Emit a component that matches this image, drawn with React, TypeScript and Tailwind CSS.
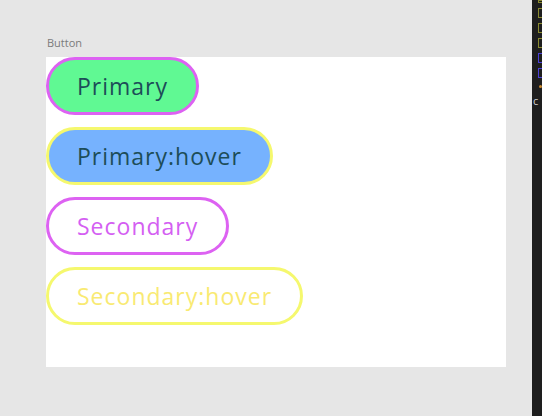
const buttons = [
  { label: 'Primary', cls: 'bg-[#60f993] border-[#dd62f2] text-[#1d4d58]' },
  { label: 'Primary:hover', cls: 'bg-[#76b2fe] border-[#f5f86e] text-[#1d4d58]' },
  { label: 'Secondary', cls: 'bg-white border-[#dd62f2] text-[#d45ff2]' },
  { label: 'Secondary:hover', cls: 'bg-white border-[#f5f86e] text-[#f9ea72]' },
];

const strip = [
  { top: 'h-[3px]', color: 'border-[#8a8a2e]' },
  { top: 'h-[10px]', color: 'border-[#8a8a2e]' },
  { top: 'h-[10px]', color: 'border-[#8a8a2e]' },
  { top: 'h-[10px]', color: 'border-[#8a8a2e]' },
  { top: 'h-[10px]', color: 'border-[#4b3fd6]' },
  { top: 'h-[10px]', color: 'border-[#4b3fd6]' },
];

export default function App() {
  return (
    <div className="flex h-[416px] w-[542px] bg-[#e6e6e6]" style={{ fontFamily: '"Open Sans", sans-serif' }}>
      <div className="flex flex-1 flex-col pl-[46px] pt-[36px]">
        <div className="pl-px text-[11px] leading-[14px] text-[#7b7b7b]">Button</div>
        <div className="mt-[7px] flex h-[310px] w-[460px] flex-col items-start gap-3 bg-white">
          {buttons.map((b) => (
            <button
              key={b.label}
              className={`h-[58px] rounded-full border-[3px] px-[28px] text-[23px] tracking-[1px] ${b.cls}`}
            >
              {b.label}
            </button>
          ))}
        </div>
      </div>
      {/* editor gutter peeking in on the right */}
      <div className="flex w-[10px] flex-col items-end gap-[5px] bg-[#1e1e1e]">
        {strip.map((s, i) => (
          <div key={i} className={`w-[4px] border border-r-0 ${s.top} ${s.color}`} />
        ))}
        <div className="mt-[2px] h-[3px] w-[3px] rounded-full bg-[#c9882c]" />
        <div className="mt-[2px] w-full pl-[1px] text-[11px] leading-[11px] text-[#cfcfcf]">c</div>
      </div>
    </div>
  );
}
